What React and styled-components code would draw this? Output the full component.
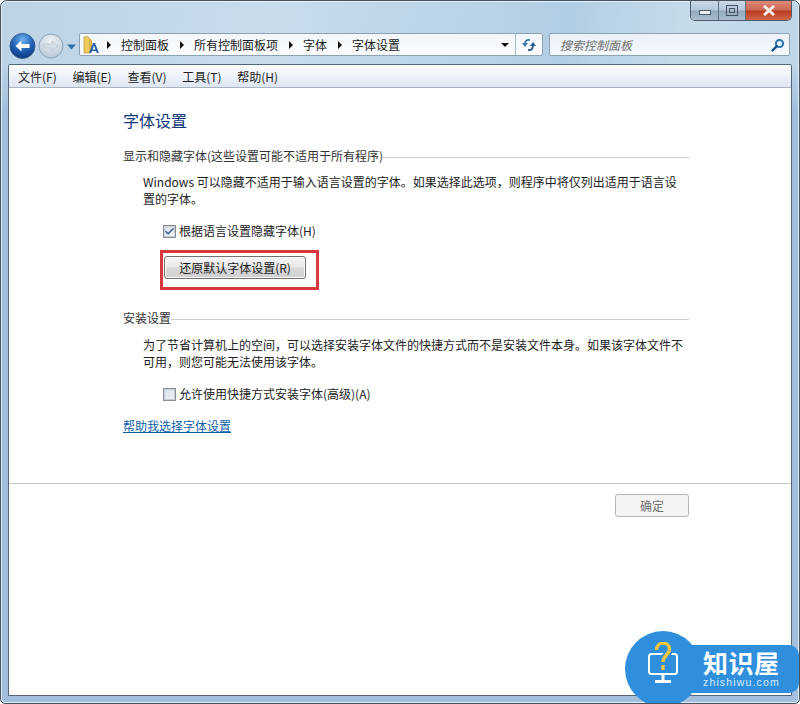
import React from 'react';
import styled, { createGlobalStyle } from 'styled-components';
import { Check } from 'lucide-react';

const GlobalStyle = createGlobalStyle`
  html, body { margin: 0; padding: 0; background: #fff; }
  body { font-family: "Noto Sans CJK SC", "Noto Sans", sans-serif; font-size: 12px; color: #1e1e1e; }
`;

const Window = styled.div`
  position: relative;
  width: 800px;
  height: 704px;
  box-sizing: border-box;
  display: flex;
  flex-direction: column;
  overflow: hidden;
  padding: 0 7px 7px;
  border: 1px solid #46525e;
  border-radius: 7px 7px 5px 5px;
  background:
    linear-gradient(to bottom, rgba(163, 191, 220, 0) 62px, #a3bfdc 110px),
    linear-gradient(100deg, #bcd3e6 0%, #c8dcec 30%, #b2cee4 62%, #c6dbea 75%, #b9d2e6 100%);
  box-shadow: inset 0 0 0 1px #e4eef6;
`;

const TitleBar = styled.div`
  height: 32px;
  flex: none;
  display: flex;
  justify-content: flex-end;
`;

const Controls = styled.div`
  display: flex;
  height: 19px;
  border: 1px solid #4f5d6b;
  border-top: none;
  border-radius: 0 0 5px 5px;
  overflow: hidden;
`;

const ControlButton = styled.div`
  width: ${p => p.$w}px;
  display: flex;
  align-items: center;
  justify-content: center;
  background: ${p => p.$close
    ? 'linear-gradient(#dd8a78 0%, #cd6a55 45%, #bd3a22 55%, #cf6a4a 100%)'
    : 'linear-gradient(#c9d8e5 0%, #b6c9d9 45%, #92a9bd 55%, #a7bdcf 100%)'};
  border-left: ${p => p.$first ? 'none' : '1px solid #5f7183'};
`;

const NavBar = styled.div`
  height: 23px;
  flex: none;
  display: flex;
  align-items: center;
`;

const NavIcons = styled.svg`
  flex: none;
  width: 70px;
  height: 30px;
  margin-right: 1px;
`;

const AddressBox = styled.div`
  width: 464px;
  height: 23px;
  box-sizing: border-box;
  flex: none;
  display: flex;
  align-items: center;
  border: 1px solid #8ea2b4;
  border-radius: 2px;
  background: linear-gradient(#f2f7fb, #fafcfe);
`;

const Crumbs = styled.div`
  flex: 1;
  display: flex;
  align-items: center;
  padding-left: 3px;
`;

const FolderIcon = styled.svg`
  flex: none;
  margin-right: 8px;
`;

const Crumb = styled.span`
  margin-right: 11px;
  color: #1a1a1a;
`;

const Arrow = styled.span`
  width: 0;
  height: 0;
  margin-right: 10px;
  border-left: 4px solid #111;
  border-top: 4px solid transparent;
  border-bottom: 4px solid transparent;
`;

const DropArrow = styled.span`
  width: 0;
  height: 0;
  margin-right: 6px;
  border-top: 4px solid #111;
  border-left: 4px solid transparent;
  border-right: 4px solid transparent;
`;

const RefreshCell = styled.div`
  width: 26px;
  height: 100%;
  display: flex;
  align-items: center;
  justify-content: center;
  border-left: 1px solid #a9bccb;
`;

const SearchBox = styled.div`
  width: 241px;
  height: 23px;
  margin-left: 6px;
  box-sizing: border-box;
  flex: none;
  display: flex;
  align-items: center;
  justify-content: space-between;
  padding: 0 4px 0 10px;
  border: 1px solid #8ea2b4;
  border-radius: 2px;
  background: linear-gradient(#eaf1f7, #f5f9fc);
  color: #6d6d6d;
  font-style: italic;
`;

const Panel = styled.div`
  flex: 1;
  margin-top: 8px;
  display: flex;
  flex-direction: column;
  min-height: 0;
  background: #fff;
  border: 1px solid #55657a;
  border-radius: 2px 2px 0 0;
`;

const MenuBar = styled.div`
  height: 23px;
  flex: none;
  box-sizing: border-box;
  display: flex;
  gap: 15.75px;
  align-items: center;
  padding-left: 9px;
  background: linear-gradient(#fbfdfe 0%, #f1f5fa 40%, #dde5f1 100%);
  border-bottom: 1px solid #aab4c0;
`;

const Content = styled.div`
  flex: 1;
  padding: 21px 102px 0 114px;
`;

const Title = styled.h1`
  margin: 0;
  height: 22px;
  line-height: 22px;
  font-size: 16px;
  font-weight: 400;
  color: #0f3a7c;
`;

const SectionHead = styled.div`
  display: flex;
  align-items: center;
  height: 18px;
  margin-top: ${p => p.$top}px;
  color: #333;
`;

const Rule = styled.div`
  flex: 1;
  height: 1px;
  margin-top: 5px;
  background: #c9cdd1;
`;

const Paragraph = styled.p`
  margin: ${p => p.$top}px 0 0 20px;
  font-size: 12px;
  line-height: 17px;
  color: #222;
`;

const CheckRow = styled.label`
  display: flex;
  align-items: center;
  gap: 3px;
  height: 18px;
  margin: ${p => p.$top}px 0 0 40px;
  color: #222;
`;

const CheckBox = styled.span`
  width: 11px;
  height: 11px;
  margin-top: 2px;
  display: flex;
  align-items: center;
  justify-content: center;
  border: 1px solid #8a8f96;
  background: linear-gradient(135deg, #d5dde6, #f4f6f9);
  box-shadow: inset 0 0 0 1px #c6cfda;
`;

const Highlight = styled.div`
  width: 159px;
  height: 40px;
  box-sizing: border-box;
  margin: 11px 0 0 37px;
  padding: 3px 0 0 1px;
  border: 3px solid #d6383c;
`;

const PushButton = styled.button`
  width: ${p => p.$w}px;
  height: 23px;
  padding: 0;
  font: inherit;
  color: ${p => p.$disabled ? '#6f6f6f' : '#1a1a1a'};
  border: 1px solid ${p => p.$disabled ? '#b5b5b5' : '#707070'};
  border-radius: 3px;
  background: ${p => p.$disabled
    ? '#f4f4f4'
    : 'linear-gradient(#f6f6f6 0%, #e9e9e9 48%, #d9d9d9 52%, #cfcfcf 100%)'};
  box-shadow: ${p => p.$disabled ? 'none' : 'inset 0 0 0 1px #fbfbfb'};
`;

const HelpLink = styled.a`
  display: block;
  margin-top: 15px;
  height: 18px;
  line-height: 18px;
  color: #0d5fa8;
  text-decoration: underline;
`;

const Footer = styled.div`
  height: 212px;
  flex: none;
  box-sizing: border-box;
  display: flex;
  justify-content: flex-end;
  padding: 10px 102px 0 0;
  border-top: 1px solid #c4c4c4;
`;

const Badge = styled.div`
  position: absolute;
  right: 0;
  bottom: 0;
  width: 174px;
  height: 72px;
`;

const BadgeCircle = styled.div`
  position: absolute;
  left: 0;
  top: 0;
  width: 76px;
  height: 76px;
  display: flex;
  align-items: flex-start;
  justify-content: center;
  border-radius: 50%;
  background: #2f8fdd;
`;

const BadgeIcon = styled.svg`
  margin-top: 11px;
`;

const BadgeBanner = styled.div`
  position: absolute;
  left: 60px;
  right: 0;
  top: 14px;
  height: 48px;
  box-sizing: border-box;
  padding: 5px 0 0 18px;
  border-radius: 0 10px 10px 0;
  background: #2f8fdd;
  color: #fff;
`;

const BadgeName = styled.div`
  font-size: 25px;
  font-weight: 700;
  line-height: 25px;
  letter-spacing: 0.5px;
`;

const BadgeUrl = styled.div`
  margin-top: 1px;
  font-family: "Liberation Sans", sans-serif;
  font-size: 10.5px;
  line-height: 12px;
  letter-spacing: 1.15px;
  color: #d7ebfa;
`;

export default function App() {
  return (
    <Window>
      <GlobalStyle />
      <TitleBar>
        <Controls>
          <ControlButton $w={27} $first>
            <svg width="12" height="8" viewBox="0 0 12 8"><rect x="0.5" y="3.5" width="11" height="4" fill="#e9eef3" stroke="#4b5b6a" /></svg>
          </ControlButton>
          <ControlButton $w={26}>
            <svg width="12" height="11" viewBox="0 0 12 11"><rect x="0.5" y="0.5" width="11" height="10" fill="none" stroke="#44525f" /><rect x="3.5" y="3.5" width="5" height="4" fill="none" stroke="#44525f" /></svg>
          </ControlButton>
          <ControlButton $w={45} $close>
            <svg width="14" height="11" viewBox="0 0 14 11"><path d="M2 1 L12 10 M12 1 L2 10" stroke="#f4ece6" strokeWidth="3" /></svg>
          </ControlButton>
        </Controls>
      </TitleBar>
      <NavBar>
        <NavIcons viewBox="0 0 70 30">
          <defs>
            <radialGradient id="back" cx="50%" cy="25%" r="80%">
              <stop offset="0" stopColor="#6fb2ec" />
              <stop offset="0.55" stopColor="#1d5fb3" />
              <stop offset="1" stopColor="#0b2f73" />
            </radialGradient>
            <radialGradient id="fwd" cx="50%" cy="30%" r="75%">
              <stop offset="0" stopColor="#eef3f7" />
              <stop offset="1" stopColor="#b5c6d5" />
            </radialGradient>
          </defs>
          <circle cx="14.5" cy="16" r="12.5" fill="url(#back)" stroke="#38608f" />
          <path d="M7.5 16 L13.5 10.5 V14 H21.5 V18 H13.5 V21.5 Z" fill="#fff" />
          <circle cx="43" cy="16" r="12" fill="url(#fwd)" stroke="#8fa3b5" />
          <path d="M50 16 L44 11 V14 H36 V18 H44 V21 Z" fill="#d5dfe8" stroke="#a9b9c7" strokeWidth="0.5" />
          <path d="M59 14.5 H68 L63.5 19.5 Z" fill="#2f6ea8" />
        </NavIcons>
        <AddressBox>
          <Crumbs>
            <FolderIcon width="16" height="18" viewBox="0 0 16 18">
              <path d="M1 1 L5 0.5 L7 3 V17 H1 Z" fill="#f0cb5c" stroke="#b8953a" strokeWidth="0.7" />
              <path d="M7 3 L9 4 V16 L7 17 Z" fill="#dcb24a" />
              <path d="M6 17 L10 7 H12 L16 17 H13.8 L13.1 15 H8.9 L8.2 17 Z M9.6 13.4 H12.4 L11 9.5 Z" fill="#2c62a8" fillRule="evenodd" />
            </FolderIcon>
            <Arrow />
            <Crumb>控制面板</Crumb>
            <Arrow />
            <Crumb>所有控制面板项</Crumb>
            <Arrow />
            <Crumb>字体</Crumb>
            <Arrow />
            <Crumb>字体设置</Crumb>
          </Crumbs>
          <DropArrow />
          <RefreshCell>
            <svg width="16" height="14" viewBox="0 0 16 14" fill="none">
              <path d="M9 2 C5.5 1.5 4 3 4 6" stroke="#3d78b0" strokeWidth="1.8" />
              <path d="M1 5 H7 L4 9 Z" fill="#3d78b0" />
              <path d="M7 12 C10.5 12.5 12 11 12 7" stroke="#26578a" strokeWidth="1.8" />
              <path d="M9 8 H15 L12 4 Z" fill="#26578a" />
            </svg>
          </RefreshCell>
        </AddressBox>
        <SearchBox>
          <span>搜索控制面板</span>
          <svg width="14" height="14" viewBox="0 0 14 14">
            <circle cx="8.5" cy="5.5" r="3.6" fill="#e8f2fa" stroke="#2a72b4" strokeWidth="2" />
            <path d="M5.8 8.2 L1.5 12.5" stroke="#1c4f80" strokeWidth="2.4" strokeLinecap="round" />
          </svg>
        </SearchBox>
      </NavBar>
      <Panel>
        <MenuBar>
          <span>文件(F)</span>
          <span>编辑(E)</span>
          <span>查看(V)</span>
          <span>工具(T)</span>
          <span>帮助(H)</span>
        </MenuBar>
        <Content>
          <Title>字体设置</Title>
          <SectionHead $top={15}>显示和隐藏字体(这些设置可能不适用于所有程序)<Rule /></SectionHead>
          <Paragraph $top={9}>Windows 可以隐藏不适用于输入语言设置的字体。如果选择此选项，则程序中将仅列出适用于语言设<br />置的字体。</Paragraph>
          <CheckRow $top={14}>
            <CheckBox><Check size={11} strokeWidth={3} color="#3c5a8c" /></CheckBox>
            根据语言设置隐藏字体(H)
          </CheckRow>
          <Highlight>
            <PushButton $w={142}>还原默认字体设置(R)</PushButton>
          </Highlight>
          <SectionHead $top={18}>安装设置<Rule /></SectionHead>
          <Paragraph $top={10}>为了节省计算机上的空间，可以选择安装字体文件的快捷方式而不是安装文件本身。如果该字体文件不<br />可用，则您可能无法使用该字体。</Paragraph>
          <CheckRow $top={14}>
            <CheckBox />
            允许使用快捷方式安装字体(高级)(A)
          </CheckRow>
          <HelpLink>帮助我选择字体设置</HelpLink>
        </Content>
        <Footer>
          <PushButton $w={74} $disabled>确定</PushButton>
        </Footer>
      </Panel>
      <Badge>
        <BadgeCircle>
          <BadgeIcon width="32" height="42" viewBox="0 0 32 42" fill="none">
            <rect x="2" y="12" width="28" height="20" rx="2.5" stroke="#fff" strokeWidth="2" />
            <path d="M16 32 V38 M8 39.5 H24" stroke="#fff" strokeWidth="3" />
            <path d="M9.5 8 C9.5 -1 22.5 -1 22.5 7 C22.5 13 16 13 16 20" stroke="#2f8fdd" strokeWidth="7" />
            <path d="M9.5 8 C9.5 -1 22.5 -1 22.5 7 C22.5 13 16 13 16 20" stroke="#f3c445" strokeWidth="3.4" />
            <path d="M16 23 V28" stroke="#f3c445" strokeWidth="3.4" />
          </BadgeIcon>
        </BadgeCircle>
        <BadgeBanner>
          <BadgeName>知识屋</BadgeName>
          <BadgeUrl>zhishiwu.com</BadgeUrl>
        </BadgeBanner>
      </Badge>
    </Window>
  );
}
